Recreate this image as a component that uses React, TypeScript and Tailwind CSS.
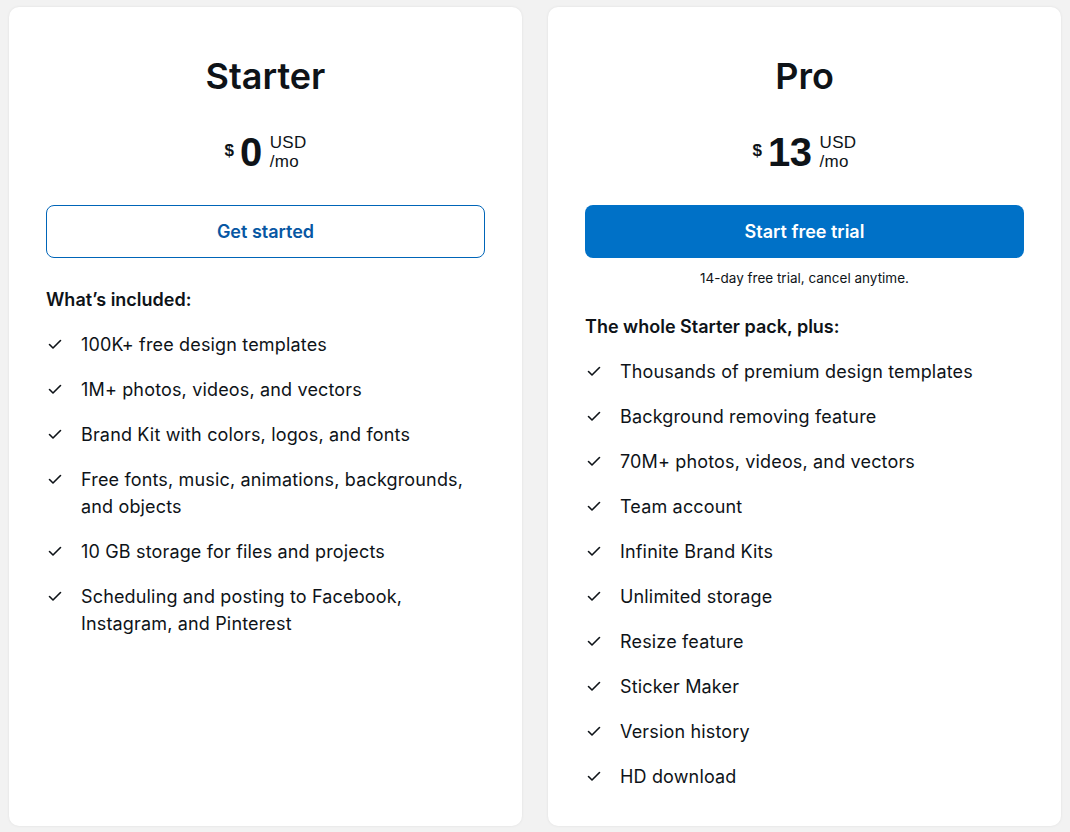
import React from "react";

const Check = () => (
  <svg width="14" height="11" viewBox="0 0 14 11" fill="none" className="mt-[8px] ml-[2px] shrink-0">
    <path d="M1.5 5.5 L5 9 L12.5 1.5" stroke="#0e1318" strokeWidth="1.6" strokeLinecap="round" strokeLinejoin="round" />
  </svg>
);

const Item = ({ text }: { text: string }) => (
  <li className="flex items-start">
    <div className="w-[35px] shrink-0 flex">
      <Check />
    </div>
    <span className="text-[18px] leading-[27px] tracking-[0.16px]">{text}</span>
  </li>
);

const Price = ({ amount }: { amount: string }) => (
  <div className="flex items-center justify-center mt-[36px] h-[40px]" style={{ fontFamily: '"Liberation Sans", Arial, sans-serif' }}>
    <span className="text-[17px] font-bold mr-[6px] mt-[-3px]">$</span>
    <span className="text-[40px] font-bold leading-[40px] tracking-[-0.5px]">{amount}</span>
    <div className="flex flex-col ml-[8px] text-[17px] leading-[19px] font-medium tracking-[0.3px]">
      <span>USD</span>
      <span>/mo</span>
    </div>
  </div>
);

export default function App() {
  const starter = [
    "100K+ free design templates",
    "1M+ photos, videos, and vectors",
    "Brand Kit with colors, logos, and fonts",
    "Free fonts, music, animations, backgrounds, and objects",
    "10 GB storage for files and projects",
    "Scheduling and posting to Facebook, Instagram, and Pinterest",
  ];
  const pro = [
    "Thousands of premium design templates",
    "Background removing feature",
    "70M+ photos, videos, and vectors",
    "Team account",
    "Infinite Brand Kits",
    "Unlimited storage",
    "Resize feature",
    "Sticker Maker",
    "Version history",
    "HD download",
  ];
  return (
    <div
      className="min-h-[832px] bg-[#f2f2f2] flex gap-[26px] px-[9px] pt-[7px] pb-[6px] text-[#0e1318]"
      style={{ fontFamily: 'Inter, "Noto Sans", sans-serif' }}
    >
      <div className="flex-1 bg-white rounded-[10px] shadow-[0_0_3px_rgba(0,0,0,0.08)] px-[37px] pt-[49px]">
        <h2 className="text-[36px] leading-[40px] font-semibold text-center">Starter</h2>
        <Price amount="0" />
        <button className="mt-[33px] w-full h-[53px] rounded-[8px] border border-[#0065b8] text-[#0757a3] text-[18px] font-semibold">
          Get started
        </button>
        <div className="mt-[28px] text-[18px] leading-[27px] font-semibold">What’s included:</div>
        <ul className="mt-[18px] flex flex-col gap-[18px]">
          {starter.map((t) => (
            <Item key={t} text={t} />
          ))}
        </ul>
      </div>
      <div className="flex-1 bg-white rounded-[10px] shadow-[0_0_3px_rgba(0,0,0,0.08)] px-[37px] pt-[49px]">
        <h2 className="text-[36px] leading-[40px] font-semibold text-center">Pro</h2>
        <Price amount="13" />
        <button className="mt-[33px] w-full h-[53px] rounded-[8px] bg-[#0071c7] text-white text-[18px] font-semibold">
          Start free trial
        </button>
        <div className="mt-[10px] text-[13.5px] leading-[20px] text-center">14-day free trial, cancel anytime.</div>
        <div className="mt-[25px] text-[18px] leading-[27px] font-semibold">The whole Starter pack, plus:</div>
        <ul className="mt-[18px] flex flex-col gap-[18px]">
          {pro.map((t) => (
            <Item key={t} text={t} />
          ))}
        </ul>
      </div>
    </div>
  );
}
